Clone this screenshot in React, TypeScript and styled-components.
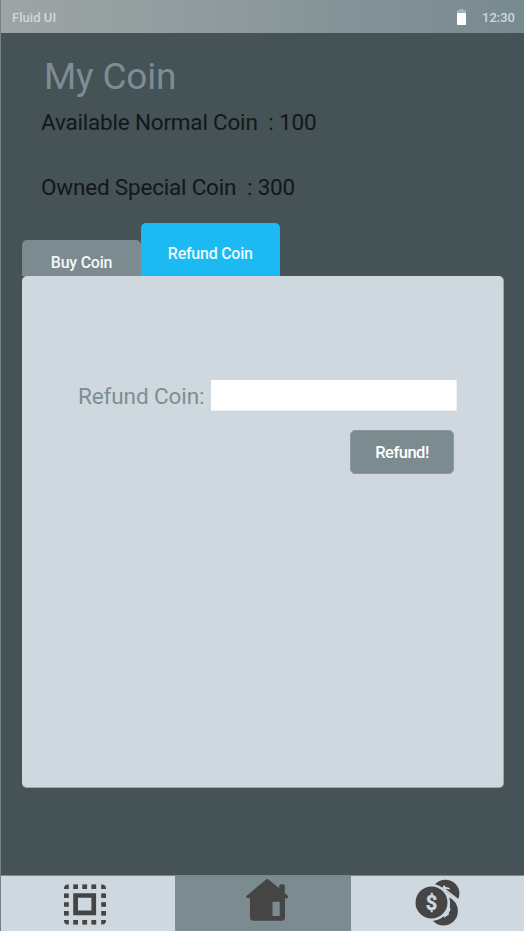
import React from "react";
import styled, { createGlobalStyle } from "styled-components";

const Global = createGlobalStyle`
  * { box-sizing: border-box; }
  body { margin: 0; font-family: Roboto, "Liberation Sans", sans-serif; background: #455256; }
`;

const Screen = styled.div`
  width: 524px;
  height: 931px;
  display: flex;
  flex-direction: column;
  background: #455256;
  border-left: 1px solid #738488;
  overflow: hidden;
`;

const StatusBar = styled.header`
  height: 33px;
  flex: none;
  display: flex;
  align-items: center;
  padding: 3px 9px 0 11px;
  background: linear-gradient(90deg, #9da4a4 0%, #96a0a0 22%, #909ca1 36%, #8a979b 52%, #7f8f95 80%, #778a8f 100%);
  color: #cfd8dc;
  font-size: 13px;
  line-height: 16px;
  font-weight: 500;
`;

const AppName = styled.span`
  flex: 1;
  letter-spacing: 0.05px;
`;

const Battery = styled.svg`
  width: 9px;
  height: 17px;
  margin: -4px 16px 0 0;
`;

const Clock = styled.span`
  letter-spacing: 0;
`;

const Summary = styled.main`
  flex: none;
  height: 190px;
  padding: 22px 0 0 40px;
`;

const Title = styled.h1`
  margin: 0 0 0 3px;
  font-size: 37px;
  line-height: 44px;
  font-weight: 400;
  letter-spacing: -0.2px;
  color: #7c8d93;
`;

const Balance = styled.p`
  margin: 10px 0 38px;
  height: 27px;
  font-size: 22.5px;
  line-height: 27px;
  letter-spacing: -0.2px;
  color: #121718;
  white-space: pre;
  & + & { margin-top: 0; }
`;

const Tabs = styled.div`
  flex: none;
  height: 53px;
  display: flex;
  align-items: flex-end;
  padding-left: 21px;
`;

const Tab = styled.button<{ $active?: boolean }>`
  width: ${(p) => (p.$active ? 138.5 : 119)}px;
  height: ${(p) => (p.$active ? 53 : 36)}px;
  padding: 9px 0 0;
  border: 0;
  border-radius: 5px 5px 0 0;
  background: ${(p) => (p.$active ? "#1bbaf3" : "#7b8b90")};
  color: ${(p) => (p.$active ? "#e8f8ff" : "#f4f6f7")};
  font: 500 16px/18px Roboto, sans-serif;
  letter-spacing: -0.25px;
`;

const Panel = styled.section`
  flex: none;
  width: 482px;
  height: 512px;
  margin-left: 21px;
  padding: 104px 46px 0 56px;
  border: solid #9aa8ad;
  border-width: 0 1px 1px 0;
  border-radius: 5px;
  background: #cfd8de;
`;

const Field = styled.label`
  display: flex;
  justify-content: space-between;
  align-items: center;
  color: #7c8f93;
  font-size: 22.5px;
  line-height: 27px;
  letter-spacing: -0.1px;
  white-space: nowrap;
`;

const FieldName = styled.span`
  padding-top: 2px;
`;

const Input = styled.input`
  width: 246px;
  height: 31px;
  padding: 0 6px;
  border: 1px solid #eef1f3;
  border-width: 0 1px 1px 0;
  background: #fff;
  font: 18px Roboto, sans-serif;
`;

const RefundButton = styled.button`
  display: block;
  width: 104px;
  height: 44px;
  margin: 19px 3px 0 auto;
  padding: 1px 0 0;
  border: 1px solid #8c9a9f;
  border-radius: 5px;
  background: #7b8b90;
  color: #fff;
  font: 500 16.5px/20px Roboto, sans-serif;
  letter-spacing: -0.5px;
`;

const BottomNav = styled.nav`
  flex: none;
  height: 56px;
  margin-top: auto;
  display: grid;
  grid-template-columns: 174px 176px 173px;
`;

const NavItem = styled.div<{ $active?: boolean }>`
  display: flex;
  justify-content: center;
  border-top: 1px solid #7b898e;
  background: ${(p) => (p.$active ? "#7b8b90" : "#cfd8de")};
`;

const NavIcon = styled.svg`
  width: 50px;
  height: 55px;
  flex: none;
  fill: #454545;
`;

const dots: [number, number][] = [];
[9.2, 18.3, 27.4].forEach((p) => {
  dots.push([p, 0], [p, 35.6]);
});
[9, 17.8, 26.6].forEach((p) => {
  dots.push([0, p], [37.2, p]);
});

function SelectIcon() {
  return (
    <NavIcon viewBox="63 876 50 55">
      <g transform="translate(64 884.4)">
        {dots.map(([x, y]) => (
          <rect key={`${x}-${y}`} x={x} y={y} width="4.8" height="4.6" />
        ))}
        <path d="M0 4.6V4Q0 0 4 0h.8v4.6zM37.2 0h.8q4 0 4 4v.6h-4.8zM0 35.6h4.8v4.6H4q-4 0-4-4zM37.2 35.6H42v.6q0 4-4 4h-.8z" />
        <path fillRule="evenodd" d="M9.2 8.8h22.9v22H9.2zM14 13.4v12.8h13.4V13.4z" />
      </g>
    </NavIcon>
  );
}

function HomeIcon() {
  return (
    <NavIcon viewBox="238 876 50 55">
      <path
        fillRule="evenodd"
        d="M266.1 879.5q1.3-1.1 2.6 0l10.5 8.7V886q0-1.8 1.8-1.8h2q1.8 0 1.8 1.8v7.3l3 2.5q1 2.2-1 2.4h-1.8v19q0 3.5-3.5 3.5h-28q-3.5 0-3.5-3.5v-19h-2q-2.5-.4-1.3-2.5zM272.5 901.8v14.2h7.2v-14.2z"
      />
    </NavIcon>
  );
}

const Dollar = styled.text`
  font: 700 20px Roboto, sans-serif;
  text-anchor: middle;
  fill: #cfd8de;
  stroke: #cfd8de;
  stroke-width: 0.4px;
`;

function CoinsIcon() {
  return (
    <NavIcon viewBox="412.5 876 50 55">
      <defs>
        <clipPath id="lower-coin">
          <path d="M446 896h4l9 7v24h-31v-12z" />
        </clipPath>
        <clipPath id="upper-coin">
          <path d="M430 876h32v26l-4.5-2-10-7-5-5-12-4z" />
        </clipPath>
      </defs>
      <g clipPath="url(#lower-coin)">
        <circle cx="443" cy="911" r="14.4" />
      </g>
      <g clipPath="url(#upper-coin)">
        <circle cx="444.9" cy="893.7" r="14" />
        <path d="M441.8 888l1.2-2.5h1.6v1.2l4.8 1.2-.4 1.6-4-.7-1.5 2z" fill="#cfd8de" />
      </g>
      <circle cx="431" cy="902.5" r="18.4" fill="#cfd8de" />
      <path d="M444 889.2l14.5 11.3" fill="none" stroke="#cfd8de" strokeWidth="1.6" />
      <path d="M448 901l1.6 0-.2 6 .6 3-1.6 2.5-.2 2.5-2.6 1.3-1.6 1.5-1-1.5 4-6z" fill="#cfd8de" />
      <circle cx="431" cy="902.5" r="16" />
      <Dollar x="431" y="909.5">$</Dollar>
    </NavIcon>
  );
}

export default function App() {
  return (
    <>
      <Global />
      <Screen>
        <StatusBar>
          <AppName>Fluid UI</AppName>
          <Battery viewBox="0 0 9 17">
            <path d="M2.5 1h4v1.3H9V5H0V2.3h2.5z" fill="#a8b3b7" />
            <rect y="5" width="9" height="12" rx=".7" fill="#fff" />
          </Battery>
          <Clock>12:30</Clock>
        </StatusBar>
        <Summary>
          <Title>My Coin</Title>
          <Balance>{"Available Normal Coin  : 100"}</Balance>
          <Balance>{"Owned Special Coin  : 300"}</Balance>
        </Summary>
        <Tabs>
          <Tab>Buy Coin</Tab>
          <Tab $active>Refund Coin</Tab>
        </Tabs>
        <Panel>
          <Field>
            <FieldName>Refund Coin:</FieldName>
            <Input />
          </Field>
          <RefundButton>Refund!</RefundButton>
        </Panel>
        <BottomNav>
          <NavItem><SelectIcon /></NavItem>
          <NavItem $active><HomeIcon /></NavItem>
          <NavItem><CoinsIcon /></NavItem>
        </BottomNav>
      </Screen>
    </>
  );
}
